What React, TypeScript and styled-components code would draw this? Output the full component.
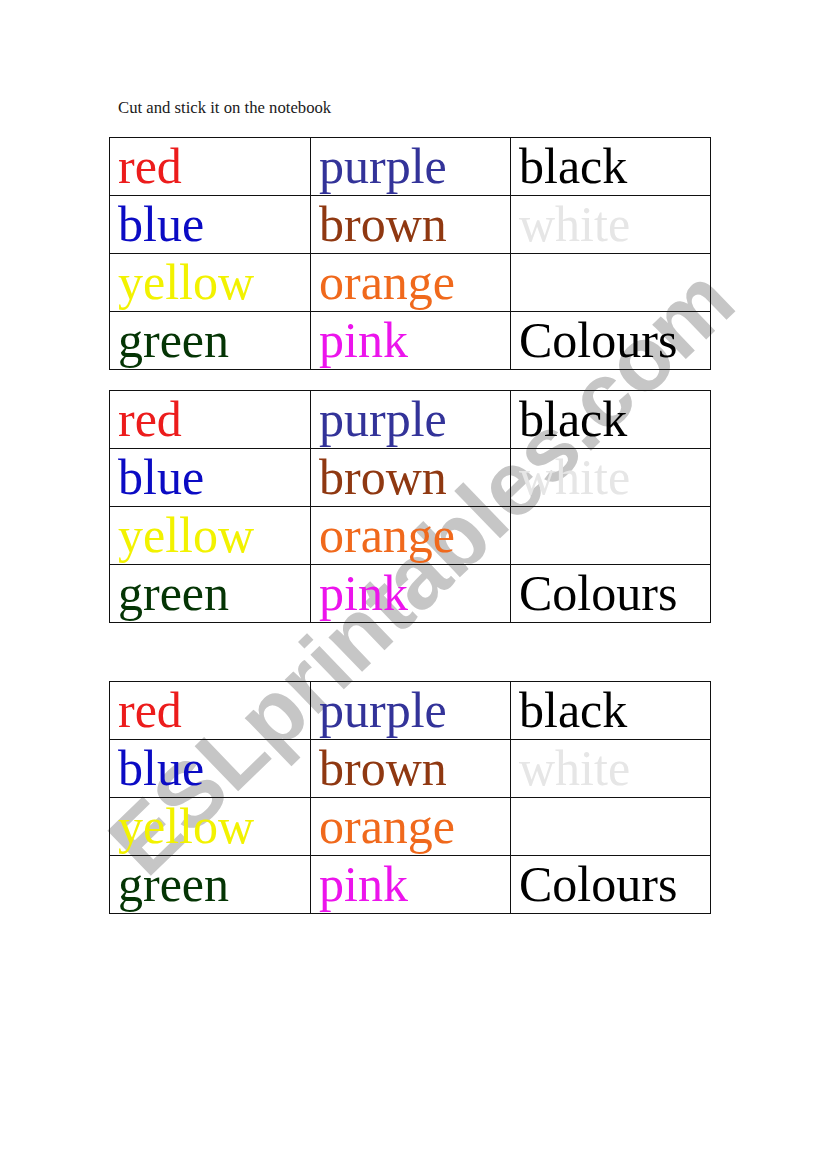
import React from "react";
import styled, { createGlobalStyle } from "styled-components";

const GlobalStyle = createGlobalStyle`
  html, body {
    margin: 0;
    padding: 0;
    background: #ffffff;
  }
`;

type Word = { text: string; color: string };

const CARD: Word[][] = [
  [
    { text: "red", color: "#ec1c1c" },
    { text: "purple", color: "#333399" },
    { text: "black", color: "#000000" },
  ],
  [
    { text: "blue", color: "#0b0bc4" },
    { text: "brown", color: "#8f3811" },
    { text: "white", color: "#e6e6e6" },
  ],
  [
    { text: "yellow", color: "#f2f200" },
    { text: "orange", color: "#f0691c" },
    { text: "", color: "#000000" },
  ],
  [
    { text: "green", color: "#053505" },
    { text: "pink", color: "#ec14ec" },
    { text: "Colours", color: "#000000" },
  ],
];

const Page = styled.div`
  position: relative;
  width: 821px;
  min-height: 1169px;
  box-sizing: border-box;
  padding: 98px 0 0 109px;
  font-family: "Liberation Serif", "Times New Roman", serif;
  overflow: hidden;
`;

const Instruction = styled.div`
  position: relative;
  z-index: 1;
  margin: 0 0 20px 9px;
  font-size: 16.7px;
  line-height: 19px;
  color: #1a1a1a;
`;

const Card = styled.div<{ $gap: number }>`
  position: relative;
  z-index: 1;
  display: grid;
  grid-template-columns: 201px 200px 200px;
  grid-auto-rows: 58px;
  width: 602px;
  box-sizing: border-box;
  border-top: 1px solid #111;
  border-left: 1px solid #111;
  margin-top: ${(p) => p.$gap}px;
`;

const Cell = styled.div<{ $color: string }>`
  box-sizing: border-box;
  border-right: 1px solid #111;
  border-bottom: 1px solid #111;
  padding-left: 8px;
  font-size: 50px;
  line-height: 56px;
  white-space: nowrap;
  color: ${(p) => p.$color};
`;

const Watermark = styled.div`
  position: absolute;
  z-index: 0;
  left: 421px;
  top: 571px;
  transform: translate(-50%, -50%) rotate(-44deg);
  font-family: "Liberation Sans", Arial, sans-serif;
  font-weight: bold;
  font-size: 91px;
  line-height: 1;
  color: #c6c6c6;
  white-space: nowrap;
  pointer-events: none;
`;

const ColourCard: React.FC<{ gap: number }> = ({ gap }) => (
  <Card $gap={gap}>
    {CARD.flat().map((w, i) => (
      <Cell key={i} $color={w.color}>
        {w.text}
      </Cell>
    ))}
  </Card>
);

export default function App(): JSX.Element {
  return (
    <>
      <GlobalStyle />
      <Page>
        <Watermark>ESLprintables.com</Watermark>
        <Instruction>Cut and stick it on the notebook</Instruction>
        <ColourCard gap={0} />
        <ColourCard gap={20} />
        <ColourCard gap={58} />
      </Page>
    </>
  );
}
